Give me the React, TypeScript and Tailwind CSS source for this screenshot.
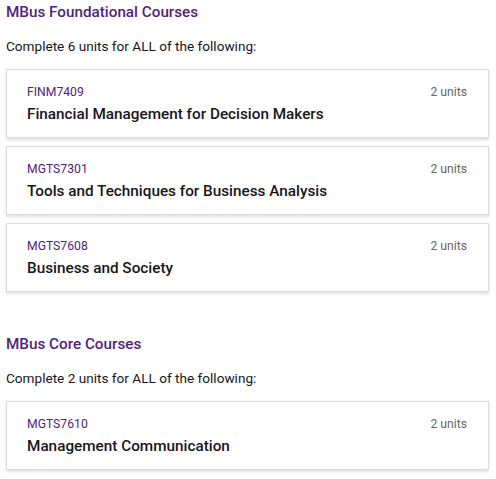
const sections = [
  {
    title: 'MBus Foundational Courses',
    rule: 'Complete 6 units for ALL of the following:',
    courses: [
      { code: 'FINM7409', name: 'Financial Management for Decision Makers', units: 2 },
      { code: 'MGTS7301', name: 'Tools and Techniques for Business Analysis', units: 2 },
      { code: 'MGTS7608', name: 'Business and Society', units: 2 },
    ],
  },
  {
    title: 'MBus Core Courses',
    rule: 'Complete 2 units for ALL of the following:',
    courses: [{ code: 'MGTS7610', name: 'Management Communication', units: 2 }],
  },
];

export default function App() {
  return (
    <div className="min-h-screen bg-white px-[6px] pt-[2px] font-['Roboto',sans-serif]">
      {sections.map((section) => (
        <section key={section.title} className="mb-[42px]">
          <h2 className="text-[15.25px] font-medium leading-[20px] text-[#51247a]">{section.title}</h2>
          <p className="mt-[14px] text-[13.6px] leading-[20px] text-[#19151c]">{section.rule}</p>
          <div className="mt-[13px] flex w-[483px] flex-col gap-[8px]">
            {section.courses.map((course) => (
              <div
                key={course.code}
                className="flex h-[69px] items-start justify-between border border-[#dcdcdc] bg-white pl-[20px] pr-[21px] pt-[14px] shadow-[0_2px_3px_rgba(0,0,0,0.12)]"
              >
                <div>
                  <div className="text-[12.2px] leading-[17px] text-[#51247a]">{course.code}</div>
                  <div className="mt-[2px] text-[15.3px] font-medium leading-[22px] text-[#19151c]">{course.name}</div>
                </div>
                <div className="text-[12.2px] leading-[17px] text-[#666]">{course.units} units</div>
              </div>
            ))}
          </div>
        </section>
      ))}
    </div>
  );
}
